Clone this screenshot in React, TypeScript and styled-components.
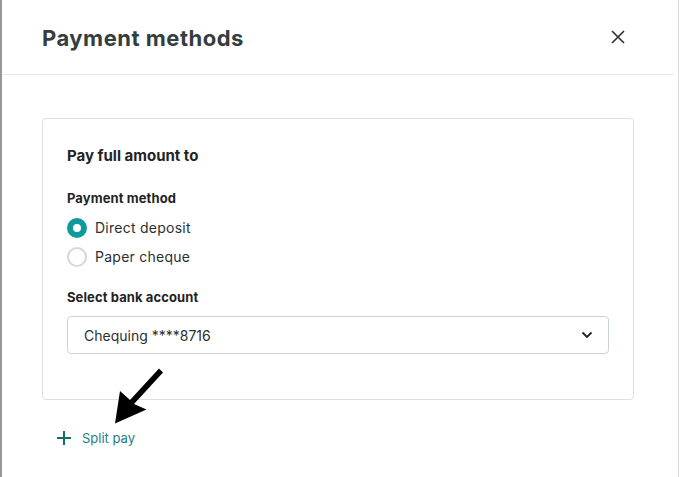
import React from 'react';
import styled, {createGlobalStyle} from 'styled-components';

const GlobalStyle = createGlobalStyle`
  html, body {
    margin: 0;
    padding: 0;
    background: #fff;
  }
  body {
    font-family: Inter, "Liberation Sans", sans-serif;
    -webkit-font-smoothing: antialiased;
  }
`;

const Screen = styled.div`
  position: relative;
  display: flex;
  width: 679px;
  height: 477px;
  overflow: hidden;
  background: #fff;
`;

const LeftRail = styled.div`
  width: 2px;
  flex: 0 0 2px;
  background: #989898;
`;

const RightRail = styled.div`
  width: 1px;
  flex: 0 0 1px;
  margin-left: 4px;
  background: #dcdcdc;
`;

const Dialog = styled.div`
  flex: 1;
  display: flex;
  flex-direction: column;
`;

const Header = styled.div`
  height: 75px;
  box-sizing: border-box;
  display: flex;
  align-items: center;
  justify-content: space-between;
  padding: 0 48px 0 40px;
  border-bottom: 1px solid #e8e8e8;
`;

const Title = styled.h1`
  margin: 2px 0 0;
  font-size: 22px;
  font-weight: 700;
  color: #343e3e;
  letter-spacing: 0.5px;
`;

const CloseButton = styled.button`
  border: 0;
  background: none;
  padding: 0;
  width: 16px;
  height: 16px;
  display: flex;
  align-items: center;
  justify-content: center;
  cursor: pointer;
  color: #2b2f2f;
`;

const Body = styled.div`
  padding: 43px 40px 0;
`;

const Card = styled.div`
  border: 1px solid #dcdfdf;
  border-radius: 4px;
  padding: 27px 24px 45px 24px;
`;

const CardTitle = styled.h2`
  margin: 0;
  font-size: 15px;
  line-height: 20px;
  font-weight: 700;
  color: #1f2424;
`;

const FieldLabel = styled.div<{top: number}>`
  margin-top: ${p => p.top}px;
  font-size: 13px;
  line-height: 18px;
  font-weight: 700;
  color: #1f2424;
  letter-spacing: 0.1px;
`;

const RadioList = styled.div`
  display: flex;
  flex-direction: column;
  gap: 9px;
  margin-top: 11px;
`;

const RadioRow = styled.label`
  display: flex;
  align-items: center;
  gap: 8px;
  font-size: 14px;
  line-height: 20px;
  letter-spacing: 0.25px;
  color: #2b3030;
  cursor: pointer;
`;

const RadioDot = styled.span<{checked?: boolean}>`
  width: 20px;
  height: 20px;
  box-sizing: border-box;
  border-radius: 50%;
  border: ${p => (p.checked ? '6px solid #0e9a98' : '2px solid #d3d7d7')};
  background: #fff;
`;

const Select = styled.div`
  margin-top: 10px;
  height: 38px;
  box-sizing: border-box;
  border: 1px solid #cdd3d3;
  border-radius: 4px;
  display: flex;
  align-items: center;
  justify-content: space-between;
  padding: 0 15px 0 16px;
  font-size: 14px;
  color: #2b3030;
`;

const SplitPay = styled.button`
  margin: 30px 0 0 14px;
  display: flex;
  align-items: center;
  gap: 10px;
  border: 0;
  background: none;
  padding: 0;
  font-family: inherit;
  font-size: 13px;
  color: #1f7f83;
  cursor: pointer;
`;

const Annotation = styled.svg`
  position: absolute;
  left: 0;
  top: 0;
  pointer-events: none;
`;

const Chevron = () => (
  <svg width="12" height="8" viewBox="0 0 12 8">
    <path d="M1.5 1.5 L6 6 L10.5 1.5" fill="none" stroke="#222" strokeWidth="1.8" />
  </svg>
);

export default function App() {
  return (
    <Screen>
      <GlobalStyle />
      <LeftRail />
      <Dialog>
        <Header>
          <Title>Payment methods</Title>
          <CloseButton aria-label="Close">
            <svg width="14" height="14" viewBox="0 0 14 14">
              <path d="M1 1 L13 13 M13 1 L1 13" stroke="currentColor" strokeWidth="1.6" />
            </svg>
          </CloseButton>
        </Header>
        <Body>
          <Card>
            <CardTitle>Pay full amount to</CardTitle>
            <FieldLabel top={23}>Payment method</FieldLabel>
            <RadioList>
              <RadioRow>
                <RadioDot checked />
                Direct deposit
              </RadioRow>
              <RadioRow>
                <RadioDot />
                Paper cheque
              </RadioRow>
            </RadioList>
            <FieldLabel top={21}>Select bank account</FieldLabel>
            <Select>
              Chequing ****8716
              <Chevron />
            </Select>
          </Card>
          <SplitPay>
            <svg width="16" height="16" viewBox="0 0 16 16">
              <path d="M8 1 V15 M1 8 H15" stroke="#0e6d6f" strokeWidth="2" />
            </svg>
            Split pay
          </SplitPay>
        </Body>
      </Dialog>
      <RightRail />
      <Annotation width="679" height="477">
        <polygon
          points="163,372.5 134,404 146.5,409.5 115,423.5 120,391 130,400 159,368.5"
          fill="#000"
          strokeLinejoin="round"
        />
      </Annotation>
    </Screen>
  );
}
